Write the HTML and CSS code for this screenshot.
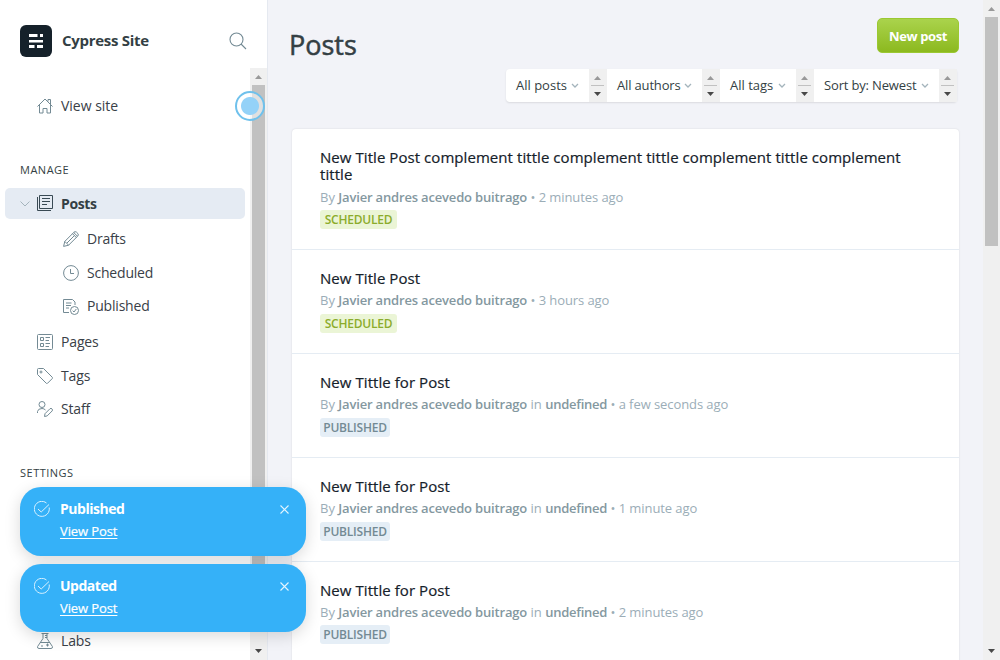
FILE: index.html
```html
<!DOCTYPE html>
<html lang="en">
<head>
<meta charset="utf-8">
<title>Posts - Cypress Site</title>
<link rel="stylesheet" href="styles.css">
</head>
<body>
<div class="app">
  <aside class="sidebar">
    <header class="site">
      <svg class="logo" width="32" height="32" viewBox="0 0 32 32"><rect width="32" height="32" rx="6" fill="#15212a"/><path fill="#fff" d="M9 9h8.500v3H9zM20 9h3v3h-3zM9 15h14v2.500H9zM9 20h5.500v3H9zM17 20h6v3h-6z"/></svg>
      <span class="site-name">Cypress Site</span>
      <svg class="search" width="18" height="18" viewBox="0 0 18 18"><circle cx="7.500" cy="7.500" r="6.500"/><path d="M12 12l5 5"/></svg>
    </header>
    <div class="nav-wrap">
      <nav class="nav">
        <a class="item view"><svg class="icon" viewBox="0 0 16 16"><path d="M.5 8.500L8 1l7.500 7.500M2.500 7v8h3.500v-4.500h4V15h3.500V7M11 3.500V1.500h2.500V6"/></svg><span>View site</span></a>
        <h2 class="group manage">Manage</h2>
        <a class="item active"><svg class="caret" viewBox="0 0 10 6"><path d="M.5.5L5 5 9.500.5"/></svg><svg class="icon" viewBox="0 0 16 16"><path d="M2.500.5h13v13h-13zM.5 2v13.500H14M5 3.500h8M5 6.500h8M5 9.500h5"/></svg><span>Posts</span></a>
        <a class="item sub drafts"><svg class="icon" viewBox="0 0 16 16"><path d="M.6 15.400l1.200-5L11 1.200q1-1 2.300-.2l1.700 1.700q.8 1.300-.2 2.300L5.600 14.200zM1.800 10.400l3.800 3.800M9.500 2.700l3.800 3.800M11.400 4.600L4 12M10.700 1.500l3.800 3.800"/></svg><span>Drafts</span></a>
        <a class="item sub scheduled"><svg class="icon" viewBox="0 0 16 16"><circle cx="8" cy="8" r="7.400"/><path d="M7.500 4v4.500H11"/></svg><span>Scheduled</span></a>
        <a class="item sub published"><svg class="icon" viewBox="0 0 16 16"><path d="M6 13.500H.5V.5h9L12 3v3M3 4h5.500M3 6.500h5M3 9h3"/><circle cx="11.500" cy="11.500" r="4"/><path d="M9.700 11.700l1.300 1.300 2.300-3"/></svg><span>Published</span></a>
        <a class="item pages"><svg class="icon" viewBox="0 0 16 16"><rect x=".5" y=".5" width="15" height="15" rx="1"/><path d="M3.500 3.500h3v3h-3zM3.500 9.500h3v3h-3zM8.500 3.500H13M8.500 6.500H12M8.500 9.500H13M8.500 12.500H12"/></svg><span>Pages</span></a>
        <a class="item tags"><svg class="icon" viewBox="0 0 16 16"><path d="M.5 1.500q0-1 1-1h5L15.300 9.300q.5.700 0 1.200l-4.800 4.800q-.6.500-1.200 0L.5 6.500z"/><circle cx="4" cy="4" r="1"/></svg><span>Tags</span></a>
        <a class="item staff"><svg class="icon" viewBox="0 0 16 16"><circle cx="5" cy="3.500" r="3"/><path d="M.5 12V10.500Q1 7.500 5 7.500q2 0 3.500 1.500M7.500 15.500l.5-2.800L13 7.700q1-.8 2 .2t.2 2l-5 5z"/></svg><span>Staff</span></a>
        <h2 class="group settings">Settings</h2>
        <a class="item labs"><svg class="icon" viewBox="0 0 16 16"><path d="M4.500.5h7M6 .5v5L.6 13.500q-.5 2 1.400 2h12q1.900 0 1.400-2L10 5.500v-5M8 2.500h2M8 4.500h2M3 9.500h10M10.500 10.500v3M9 12h3M4 13h2"/></svg><span>Labs</span></a>
      </nav>
      <div class="scroll"><i class="up"></i><b class="thumb"></b><i class="down"></i></div>
    </div>
  </aside>
  <main class="main">
    <header class="top">
      <h1>Posts</h1>
      <button class="new">New post</button>
    </header>
    <div class="filters">
      <div class="filter f1"><span>All posts</span><svg viewBox="0 0 8 5"><path d="M1 1l3 3 3-3"/></svg></div><div class="spin"><i class="up"></i><i class="down"></i></div>
      <div class="filter f2"><span>All authors</span><svg viewBox="0 0 8 5"><path d="M1 1l3 3 3-3"/></svg></div><div class="spin"><i class="up"></i><i class="down"></i></div>
      <div class="filter f3"><span>All tags</span><svg viewBox="0 0 8 5"><path d="M1 1l3 3 3-3"/></svg></div><div class="spin"><i class="up"></i><i class="down"></i></div>
      <div class="filter f4"><span>Sort by: Newest</span><svg viewBox="0 0 8 5"><path d="M1 1l3 3 3-3"/></svg></div><div class="spin"><i class="up"></i><i class="down"></i></div>
    </div>
    <section class="list">
      <article class="post long"><h3>New Title Post complement tittle complement tittle complement tittle complement tittle</h3><p><span>By</span> <b class="author">Javier andres acevedo buitrago</b> <span class="when">• 2 minutes ago</span></p><em class="badge sched">Scheduled</em></article>
      <article class="post"><h3>New Title Post</h3><p><span>By</span> <b class="author">Javier andres acevedo buitrago</b> <span class="when">• 3 hours ago</span></p><em class="badge sched">Scheduled</em></article>
      <article class="post"><h3>New Tittle for Post</h3><p><span>By</span> <b class="author">Javier andres acevedo buitrago</b> in <b class="undef">undefined</b> <span class="when">• a few seconds ago</span></p><em class="badge pub">Published</em></article>
      <article class="post"><h3>New Tittle for Post</h3><p><span>By</span> <b class="author">Javier andres acevedo buitrago</b> in <b class="undef">undefined</b> <span class="when">• 1 minute ago</span></p><em class="badge pub">Published</em></article>
      <article class="post last"><h3>New Tittle for Post</h3><p><span>By</span> <b class="author">Javier andres acevedo buitrago</b> in <b class="undef">undefined</b> <span class="when">• 2 minutes ago</span></p><em class="badge pub">Published</em></article>
    </section>
  </main>
  <div class="scroll page"><i class="up"></i><b class="thumb"></b><i class="down"></i></div>
</div>
<div class="pointer"></div>
<div class="toasts">
  <div class="toast"><svg class="check" viewBox="0 0 16 16"><path d="M15.200 6.500A7.500 7.500 0 1 1 12.500 2M4 8l3.200 3L15 3.500"/></svg><div class="msg"><strong>Published</strong><a>View Post</a></div><svg class="close" viewBox="0 0 9 9"><path d="M.5.500l8 8M8.500.500l-8 8"/></svg></div>
  <div class="toast second"><svg class="check" viewBox="0 0 16 16"><path d="M15.200 6.500A7.500 7.500 0 1 1 12.500 2M4 8l3.200 3L15 3.500"/></svg><div class="msg"><strong>Updated</strong><a>View Post</a></div><svg class="close" viewBox="0 0 9 9"><path d="M.5.500l8 8M8.500.500l-8 8"/></svg></div>
</div>
</body>
</html>
```
FILE: styles.css
```css
* { box-sizing: border-box; }
body { margin: 0; width: 1000px; height: 660px; overflow: hidden; font-family: "Open Sans", "Noto Sans", sans-serif; font-size: 14px; color: #394047; background: #f2f3f8; }
h1, h2, h3, p { margin: 0; font-weight: 400; }
svg { fill: none; flex: none; }
.app { display: flex; height: 660px; }
.sidebar { width: 268px; flex: none; display: flex; flex-direction: column; background: #fff; border-right: 1px solid #e5e9f0; }
.site { display: flex; align-items: center; height: 68px; padding: 14px 20px 0 20px; }
.site-name { margin-left: 10px; padding-bottom: 2px; font-size: 15px; font-weight: 700; letter-spacing: -.28px; color: #343f44; flex: 1; white-space: nowrap; }
.search { stroke: #738a94; stroke-width: 1.100; }
.nav-wrap { display: flex; flex: 1; min-height: 0; }
.nav { flex: 1; padding-left: 5px; padding-right: 5px; }
.item { display: flex; align-items: center; height: 34px; padding-left: 32px; gap: 8px; letter-spacing: -.15px; white-space: nowrap; }
.item span { padding-bottom: 2px; }
.icon { width: 16px; height: 16px; stroke: #738a94; stroke-width: 1; stroke-linejoin: round; }
.view { margin-top: 21px; letter-spacing: -.02px; }
.group { margin-left: 15px; font-size: 11px; line-height: 16px; text-transform: uppercase; letter-spacing: .5px; color: #343f44; }
.manage { margin-top: 39px; margin-bottom: 10px; }
.active { height: 31px; padding-left: 15px; background: #e5ebf3; border-radius: 5px; font-weight: 700; letter-spacing: -.4px; color: #343f44; gap: 0; }
.active span { padding-bottom: 0; }
.active .caret { width: 10px; height: 6px; margin-right: 7px; stroke: #a4b4bc; }
.active .icon { margin-right: 8px; margin-bottom: 1px; stroke: #394a54; }
.sub { padding-left: 58px; letter-spacing: -.2px; }
.drafts { margin-top: 3px; }
.published { height: 33px; }
.pages { margin-top: 2px; }
.staff { height: 32px; }
.settings { margin-top: 40px; }
.labs { margin-top: 143px; }
.scroll { display: flex; flex-direction: column; align-items: center; width: 17px; background: #f0f0f0; flex: none; }
.up, .down { width: 7px; height: 4px; flex: none; background: #999; clip-path: polygon(50% 0, 100% 100%, 0 100%); }
.down { background: #484848; clip-path: polygon(0 0, 100% 0, 50% 100%); }
.scroll .up { margin: 7px 0 6px; }
.scroll .down { margin: auto 0 7px; }
.thumb { width: 13px; height: 510px; background: #c1c1c1; }
.page .thumb { height: 229px; }
.main { flex: 1; padding: 18px 24px 0 22px; }
.top { display: flex; justify-content: space-between; height: 51px; }
h1 { font-size: 27px; line-height: 37px; margin-top: 8px; margin-left: -1px; -webkit-text-stroke: .5px #343f44; color: #343f44; }
.new { width: 82px; height: 35px; padding: 0; border: 1px solid #9bc832; border-radius: 5px; background: linear-gradient(#aad34c, #8cb91f); color: #fff; font: 700 13px "Open Sans", sans-serif; letter-spacing: -.4px; white-space: nowrap; }
.filters { display: flex; width: 451px; height: 33px; margin-left: 216px; background: #fff; border-radius: 4px; box-shadow: 0 1px 2px #0000001a; }
.filter { display: flex; align-items: center; justify-content: space-between; padding: 0 10px; font-size: 13px; letter-spacing: -.16px; color: #343f44; white-space: nowrap; }
.filter span { padding-bottom: 1px; }
.filter svg { width: 8px; height: 5px; stroke: #a4b4bc; stroke-width: 1.300; }
.f1 { width: 83px; letter-spacing: 0; } .f2 { width: 95px; } .f3 { width: 76px; letter-spacing: 0; } .f4 { width: 125px; }
.spin { width: 18px; display: flex; flex-direction: column; align-items: center; justify-content: space-between; padding: 7px 1px 6px 0; background: linear-gradient(#c1c1c1, #c1c1c1) 2px 16px / 13px 1px no-repeat, #f0f0f0; }
.list { width: 667px; height: 540px; margin: 27px 0 0 2px; background: #fff; border-radius: 4px; box-shadow: 0 0 2px #00000020; }
.post { padding: 20px 28px 20px; border-bottom: 1px solid #e5ecf3; }
.post h3 { font-size: 15px; line-height: 17px; letter-spacing: .06px; color: #15212a; -webkit-text-stroke: .2px #15212a; }
.post p { font-size: 13px; line-height: 18px; margin-top: 4px; color: #9badb7; white-space: nowrap; }
.post b { font-weight: 600; color: #84989f; letter-spacing: -.17px; }
.post .undef { letter-spacing: -.25px; }
.when { letter-spacing: -.08px; }
.post .badge { display: block; width: 70px; height: 19px; margin-top: 5px; border-radius: 3px; font: 600 12px/20px "Open Sans", sans-serif; letter-spacing: -.22px; text-align: center; text-transform: uppercase; white-space: nowrap; }
.post .sched { width: 77px; background: #ebf5d6; color: #8bac2c; }
.pub { background: #e5eef6; color: #738a94; }
.long p { margin-top: 5px; }
.post.long .badge { margin-top: 4px; }
.last { border: 0; }
.post.last .badge { margin-top: 4px; }
.pointer { position: absolute; left: 235px; top: 91px; width: 30px; height: 30px; border: 2px solid #6fc1ec; border-radius: 50%; background: radial-gradient(circle, #94d2f8 0 8.500px, #ffffff80 9.500px); }
.toasts { position: absolute; left: 20px; top: 487px; width: 286px; display: flex; flex-direction: column; gap: 8px; }
.toast { display: flex; height: 69px; padding: 14px 17px 0 14px; border-radius: 21px; background: #35b1f8; color: #fff; box-shadow: 0 4px 16px #00000026; }
.toast.second { height: 68px; }
.check { width: 16px; height: 16px; stroke: #d9f1ff; }
.close { width: 9px; height: 9px; margin-top: 4px; stroke: #e4f5ff; stroke-width: 1.100; }
.msg { display: flex; flex-direction: column; flex: 1; align-items: flex-start; margin-left: 10px; line-height: 22px; margin-top: -3px; }
.msg strong { font-size: 14px; letter-spacing: -.48px; }
.msg a { font-size: 13px; letter-spacing: -.1px; -webkit-text-stroke: .2px #fff; text-decoration: underline; text-underline-offset: 2px; }
```
